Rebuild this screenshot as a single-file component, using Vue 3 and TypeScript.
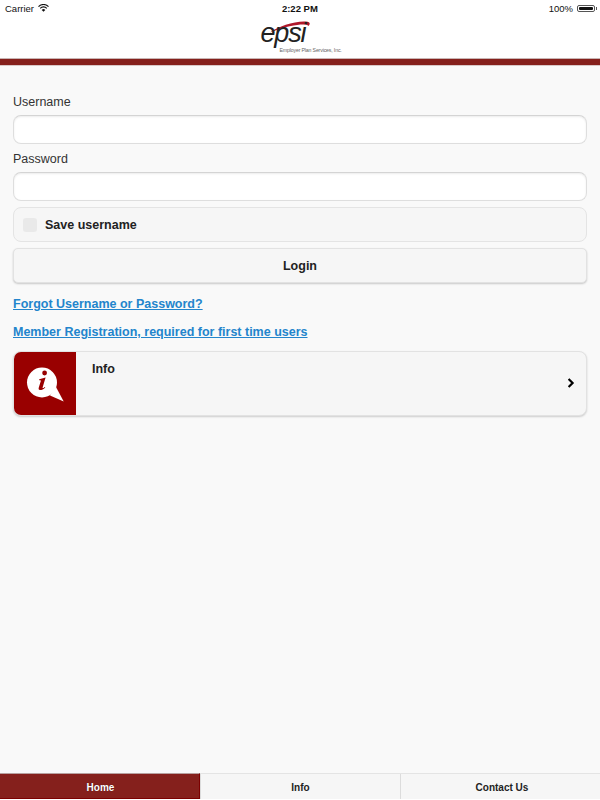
<template>
  <div class="page">
    <div class="status">
      <div class="status-left">
        <span>Carrier</span>
        <svg width="11" height="8" viewBox="0 0 11 8" class="wifi">
          <path d="M0.5 2.6 A7 7 0 0 1 10.5 2.6" fill="none" stroke="#111" stroke-width="1.2" />
          <path d="M2.2 4.3 A4.6 4.6 0 0 1 8.8 4.3" fill="none" stroke="#111" stroke-width="1.2" />
          <path d="M3.7 5.9 L5.5 7.8 L7.3 5.9 A2.6 2.6 0 0 0 3.7 5.9 Z" fill="#111" />
        </svg>
      </div>
      <div class="status-time">2:22 PM</div>
      <div class="status-right">
        <span>100%</span>
        <span class="battery"><span class="battery-fill"></span></span>
      </div>
    </div>

    <header class="header">
      <div class="logo">
        <svg class="swoosh" width="42" height="12" viewBox="0 0 42 12">
          <path d="M1 11.5 C10 5 27 -0.5 38.5 0.8 C41 1.2 41.5 3.2 39.5 5 C39 2.4 24 2.4 1 11.5 Z" fill="#b0182a" />
        </svg>
        <span class="logo-word">epsi</span>
        <span class="logo-sub">Employer Plan Services, Inc.</span>
      </div>
    </header>
    <div class="redbar"></div>

    <main class="content">
      <label class="label">Username</label>
      <div class="input"></div>
      <label class="label second">Password</label>
      <div class="input"></div>

      <div class="check-row">
        <span class="checkbox"></span>
        <span>Save username</span>
      </div>
      <div class="login">Login</div>

      <a class="link">Forgot Username or Password?</a>
      <a class="link">Member Registration, required for first time users</a>

      <div class="card">
        <div class="card-icon">
          <svg width="40" height="40" viewBox="0 0 40 40">
            <circle cx="17" cy="18.5" r="15" fill="#fff" />
            <path d="M31 23 L38.7 37.5 L25 31.5 Z" fill="#fff" />
            <circle cx="19.6" cy="9" r="2.4" fill="#990000" />
            <path d="M14.2 15.2 L20.6 13.6 L17.6 23.4 C17.3 24.4 18 24.4 19.8 22.9 L20.3 23.5 C18.2 25.6 16.6 26.2 15 26.1 C13.6 26 13.4 25 13.8 23.6 L15.8 17 C16 16.2 15.4 16.1 14.2 16.2 Z" fill="#990000" />
          </svg>
        </div>
        <div class="card-title">Info</div>
        <svg class="chevron" width="8" height="10" viewBox="0 0 8 10">
          <path d="M1.6 1 L5.6 5 L1.6 9" fill="none" stroke="#000" stroke-width="2.2" />
        </svg>
      </div>
    </main>

    <nav class="tabs">
      <div
        v-for="tab in tabs"
        :key="tab"
        class="tab"
        :class="{ active: tab === currentTab }"
      >
        {{ tab }}
      </div>
    </nav>
  </div>
</template>

<script setup lang="ts">
const tabs: string[] = ["Home", "Info", "Contact Us"];
const currentTab = "Home";
</script>

<style>
html,
body {
  margin: 0;
  background: #fff;
}
</style>

<style scoped>
.page {
  width: 600px;
  height: 799px;
  display: flex;
  flex-direction: column;
  font-family: "Liberation Sans", Arial, sans-serif;
  background: #f9f9f9;
  color: #222;
}

.status {
  height: 16px;
  background: #fff;
  display: flex;
  align-items: center;
  justify-content: space-between;
  padding: 0 3px 0 5px;
  font-size: 9.5px;
  color: #111;
  flex-shrink: 0;
}

.status-left,
.status-right {
  display: flex;
  align-items: center;
  gap: 4px;
}

.status-time {
  font-weight: bold;
  font-size: 9.5px;
  margin-left: 2px;
}

.battery {
  width: 18px;
  height: 7px;
  margin-right: 2px;
  border: 1px solid #555;
  border-radius: 2px;
  padding: 1px;
  box-sizing: border-box;
  display: flex;
  position: relative;
}

.battery::after {
  content: "";
  position: absolute;
  right: -3px;
  top: 1px;
  width: 1px;
  height: 3px;
  background: #555;
}

.battery-fill {
  flex: 1;
  background: #111;
  border-radius: 1px;
}

.header {
  height: 42px;
  background: #fff;
  display: flex;
  justify-content: center;
  flex-shrink: 0;
}

.logo {
  position: relative;
  width: 82px;
  height: 42px;
  margin-left: 1px;
}

.swoosh {
  position: absolute;
  left: 9px;
  top: 5px;
}

.logo-word {
  position: absolute;
  left: 1px;
  top: 5px;
  font-style: italic;
  font-size: 27px;
  line-height: 24px;
  letter-spacing: -1.2px;
  color: #222;
}

.logo-sub {
  position: absolute;
  left: 20px;
  top: 30px;
  font-size: 5.2px;
  line-height: 8px;
  white-space: nowrap;
  color: #666;
  letter-spacing: -0.15px;
}

.redbar {
  height: 8px;
  box-sizing: border-box;
  background: #85201c;
  border-top: 1px solid #c9b5b4;
  border-bottom: 1px solid #d8c8c7;
  flex-shrink: 0;
}

.content {
  flex: 1;
  padding: 27px 13px 0;
  display: flex;
  flex-direction: column;
}

.label {
  font-size: 12.5px;
  line-height: 18px;
  color: #333;
  margin-bottom: 4px;
}

.label.second {
  margin-top: 6px;
}

.input {
  height: 29px;
  box-sizing: border-box;
  background: #fff;
  border: 1px solid #dedede;
  border-top-color: #d4d4d4;
  border-radius: 8px;
  box-shadow: inset 0 1px 2px rgba(0, 0, 0, 0.08);
}

.check-row {
  margin-top: 6px;
  height: 35px;
  box-sizing: border-box;
  background: #f6f6f6;
  border: 1px solid #e4e4e4;
  border-radius: 8px;
  display: flex;
  align-items: center;
  padding-left: 9px;
  gap: 8px;
  font-size: 12.5px;
  font-weight: bold;
}

.checkbox {
  width: 14px;
  height: 14px;
  border-radius: 3px;
  background: #e9e9e9;
}

.login {
  margin-top: 6px;
  height: 35px;
  box-sizing: border-box;
  background: #f6f6f6;
  border: 1px solid #e2e2e2;
  border-radius: 5px;
  box-shadow: 0 1px 2px rgba(0, 0, 0, 0.2);
  display: flex;
  align-items: center;
  justify-content: center;
  font-size: 12.5px;
  font-weight: bold;
}

.link {
  font-size: 12.5px;
  line-height: 18px;
  font-weight: bold;
  color: #2385cc;
  text-decoration: underline;
  margin-top: 12px;
}

.link + .link {
  margin-top: 10px;
}

.card {
  margin-top: 10px;
  height: 65px;
  box-sizing: border-box;
  background: #f6f6f6;
  border: 1px solid #e2e2e2;
  border-radius: 8px;
  box-shadow: 0 1px 2px rgba(0, 0, 0, 0.18);
  display: flex;
  position: relative;
  overflow: hidden;
}

.card-icon {
  width: 62px;
  background: #990000;
  display: flex;
  align-items: center;
  justify-content: center;
  flex-shrink: 0;
}

.card-title {
  font-size: 12.5px;
  font-weight: bold;
  line-height: 16px;
  margin: 9px 0 0 16px;
}

.chevron {
  position: absolute;
  right: 11px;
  top: 26px;
}

.tabs {
  height: 26px;
  display: grid;
  grid-template-columns: 200px 200px 200px;
  flex-shrink: 0;
  background: #f6f6f6;
  border-top: 1px solid #e4e4e4;
  box-sizing: border-box;
}

.tab {
  display: flex;
  align-items: center;
  justify-content: center;
  box-sizing: border-box;
  padding-top: 1px;
  font-size: 10px;
  font-weight: bold;
  color: #222;
  border-left: 1px solid #dcdcdc;
}

.tab:first-child {
  border-left: none;
}

.tab:last-child {
  padding-left: 3px;
}

.tab.active {
  background: #85201c;
  color: #fff;
  border-right: 1px solid #7c0000;
  border-bottom: 1px solid #7c0000;
  border-top: 1px solid #b8a0a0;
  margin-top: -1px;
  padding-top: 2px;
  padding-left: 2px;
  text-shadow: 0 0 1px rgba(0, 0, 0, 0.5);
}
</style>
